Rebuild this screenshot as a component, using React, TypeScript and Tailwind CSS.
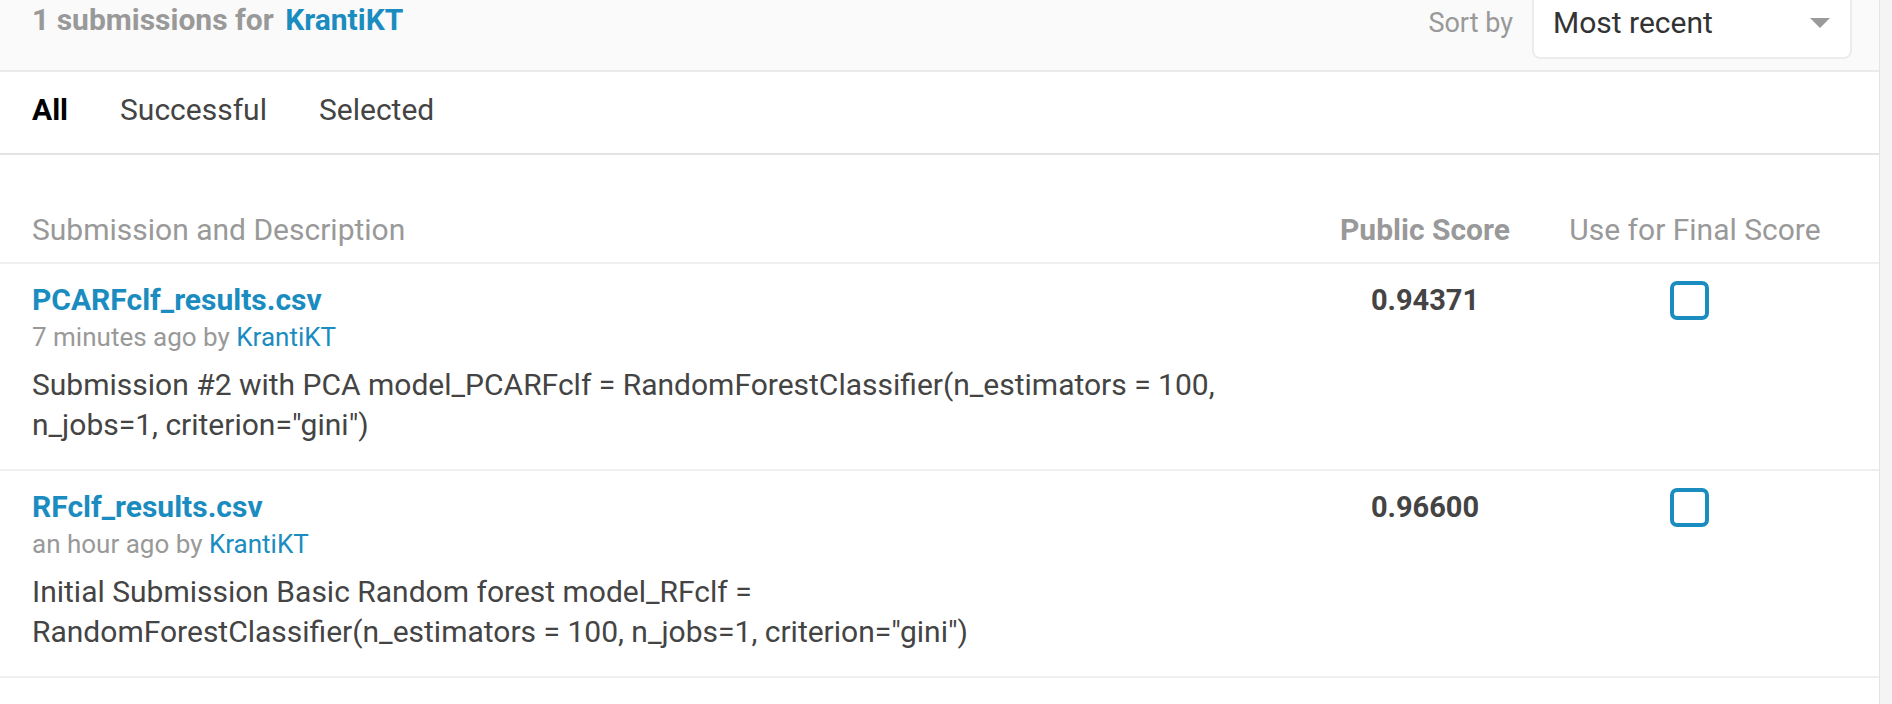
import React from 'react';

type Submission = {
  file: string;
  when: string;
  author: string;
  description: React.ReactNode;
  score: string;
};

const submissions: Submission[] = [
  {
    file: 'PCARFclf_results.csv',
    when: '7 minutes ago by',
    author: 'KrantiKT',
    description: (
      <>
        Submission #2 with PCA model_PCARFclf = RandomForestClassifier(n_estimators = 100,
        <br />
        n_jobs=1, criterion="gini")
      </>
    ),
    score: '0.94371',
  },
  {
    file: 'RFclf_results.csv',
    when: 'an hour ago by',
    author: 'KrantiKT',
    description: (
      <>
        Initial Submission Basic Random forest model_RFclf =
        <br />
        RandomForestClassifier(n_estimators = 100, n_jobs=1, criterion="gini")
      </>
    ),
    score: '0.96600',
  },
];

export default function App() {
  return (
    <div className="min-h-screen bg-[#f4f4f4] font-['Roboto','Liberation_Sans',sans-serif]">
      <div className="w-[1880px] min-h-[704px] bg-white border-r border-[#e4e4e4]">
        {/* header */}
        <header className="h-[72px] bg-[#fafafa] border-b-2 border-[#ebebeb] flex items-start justify-between pl-[32px] pr-[27px]">
          <h2 className="pt-[2px] text-[30px] leading-[36px] font-bold text-[#999999]">
            1 submissions for <span className="text-[#1b8cbf] ml-[4px]">KrantiKT</span>
          </h2>
          <div className="flex items-start">
            <span className="pt-[5px] text-[27px] leading-[36px] text-[#999999] mr-[19px]">Sort by</span>
            <div className="-mt-[13px] w-[320px] h-[72px] bg-white border-2 border-[#ececec] rounded-[8px] flex items-start justify-between pl-[19px] pr-[20px]">
              <span className="pt-[16px] text-[30px] leading-[36px] text-[#333333]">Most recent</span>
              <span className="pt-[29px]">
                <svg width="20" height="10" viewBox="0 0 20 10" className="block">
                  <path d="M0 0 L20 0 L10 10 Z" fill="#9a9a9a" />
                </svg>
              </span>
            </div>
          </div>
        </header>

        {/* tabs */}
        <nav className="h-[83px] border-b-2 border-[#e4e4e4] flex items-start pt-[20px] pl-[32px] gap-[52px] text-[30px] leading-[36px] text-[#444444]">
          <span className="font-bold text-black">All</span>
          <span>Successful</span>
          <span>Selected</span>
        </nav>

        {/* table */}
        <div className="grid grid-cols-[1fr_214px_326px] items-start h-[109px] pt-[57px] border-b-2 border-[#efefef] pl-[32px] pr-[21px] text-[30px] leading-[36px] text-[#999999]">
          <div>Submission and Description</div>
          <div className="text-center font-bold">Public Score</div>
          <div className="text-center">Use for Final Score</div>
        </div>

        {submissions.map((s) => (
          <div
            key={s.file}
            className="grid grid-cols-[1fr_214px_326px] h-[207px] pt-[18px] border-b-2 border-[#efefef] pl-[32px] pr-[21px]"
          >
            <div>
              <div className="text-[30px] leading-[36px] font-bold text-[#1b8cbf]">{s.file}</div>
              <div className="mt-[1px] text-[26px] leading-[36px] text-[#999999]">
                {s.when} <span className="text-[#1b8cbf]">{s.author}</span>
              </div>
              <p className="mt-[10px] text-[30px] leading-[40px] text-[#444444]">{s.description}</p>
            </div>
            <div className="text-center text-[29px] leading-[36px] font-bold text-[#444444]">{s.score}</div>
            <div className="flex justify-center">
              <div className="ml-[-12px] mt-[-1px] w-[39px] h-[39px] rounded-[7px] border-4 border-[#1b8cbf] bg-white" />
            </div>
          </div>
        ))}
      </div>
    </div>
  );
}
